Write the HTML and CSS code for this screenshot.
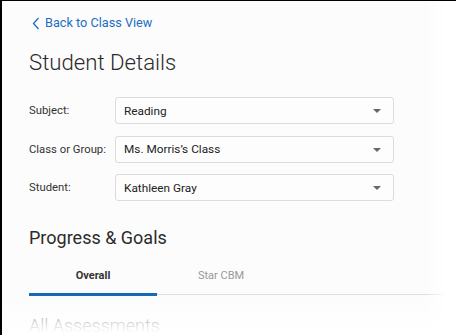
FILE: index.html
```html
<!DOCTYPE html>
<html lang="en">

<head>
    <meta charset="UTF-8">
    <meta name="viewport" content="width=device-width, initial-scale=1.0">
    <title>Student Details</title>
    <link rel="stylesheet" href="styles.css">
</head>

<body>

    <div class="page">
        <a class="back-link" href="#">
            <svg class="chevron" width="8" height="13" viewBox="0 0 8 13">
                <path d="M6.5 1 L1.5 6.5 L6.5 12" fill="none" stroke="#1b6ec2" stroke-width="1.3" />
            </svg>
            Back to Class View
        </a>

        <h1>Student Details</h1>

        <div class="filters">
            <div class="filter-row">
                <label>Subject:</label>
                <div class="select">Reading<span class="caret"></span></div>
            </div>
            <div class="filter-row">
                <label>Class or Group:</label>
                <div class="select">Ms. Morris’s Class<span class="caret"></span></div>
            </div>
            <div class="filter-row">
                <label>Student:</label>
                <div class="select">Kathleen Gray<span class="caret"></span></div>
            </div>
        </div>

        <h2>Progress &amp; Goals</h2>

        <div class="tabs">
            <div class="tab active">Overall</div>
            <div class="tab">Star CBM</div>
        </div>

        <h2 class="section">All Assessments</h2>

        <div class="fade-right"></div>
        <div class="fade-bottom"></div>
    </div>

</body>

</html>
```

FILE: styles.css
```css
body {
    margin: 0;
    font-family: Roboto, "Noto Sans", sans-serif;
    background-color: #fff;
    overflow: hidden;
}

.page {
    position: relative;
    height: 335px;
    overflow: hidden;
    border-top: 1px solid #000;
    border-left: 2px solid #000;
    background: #fcfcfc;
    padding: 14px 0 0 27px;
    box-sizing: border-box;
    color: #333;
}

.back-link {
    display: flex;
    align-items: center;
    gap: 5px;
    padding-left: 3px;
    color: #1b6ec2;
    text-decoration: none;
    font-size: 12.7px;
    line-height: 16px;
}

h1 {
    margin: 17px 0 0;
    font-size: 22.2px;
    font-weight: 300;
    line-height: 28px;
    color: #2b2b2b;
}

.filters {
    margin-top: 21px;
    display: flex;
    flex-direction: column;
    gap: 11.5px;
}

.filter-row {
    display: flex;
    align-items: center;
}

.filter-row label {
    width: 86px;
    font-size: 11.3px;
    color: #333;
}

.select {
    position: relative;
    width: 279px;
    height: 27px;
    box-sizing: border-box;
    border: 1px solid #dcdcdc;
    border-radius: 3px;
    background: #fdfdfd;
    padding-left: 8px;
    display: flex;
    align-items: center;
    font-size: 11.8px;
    color: #222;
}

.caret {
    position: absolute;
    right: 12px;
    top: 11px;
    border-left: 4px solid transparent;
    border-right: 4px solid transparent;
    border-top: 4px solid #666;
}

h2 {
    margin: 26px 0 0;
    font-size: 18px;
    font-weight: 400;
    line-height: 22px;
    color: #2b2b2b;
}

.tabs {
    margin-top: 15px;
    display: flex;
    border-bottom: 1px solid #dedede;
    margin-right: -20px;
}

.tab {
    width: 128px;
    text-align: center;
    font-size: 11px;
    color: #999;
    padding: 5px 0 11px;
    border-bottom: 3px solid transparent;
    margin-bottom: -2px;
}

.tab.active {
    color: #333;
    font-weight: 700;
    border-bottom-color: #1769b3;
}

.section {
    margin-top: 20px;
    font-weight: 300;
    color: #555;
}

.fade-right {
    position: absolute;
    top: -1px;
    right: 0;
    width: 32px;
    height: 100%;
    background: linear-gradient(to right, rgba(255, 255, 255, 0), #fff 70%);
}

.fade-bottom {
    position: absolute;
    left: -2px;
    right: 0;
    bottom: 0;
    height: 40px;
    background: linear-gradient(to bottom, rgba(255, 255, 255, 0), #fff 95%);
}
```
